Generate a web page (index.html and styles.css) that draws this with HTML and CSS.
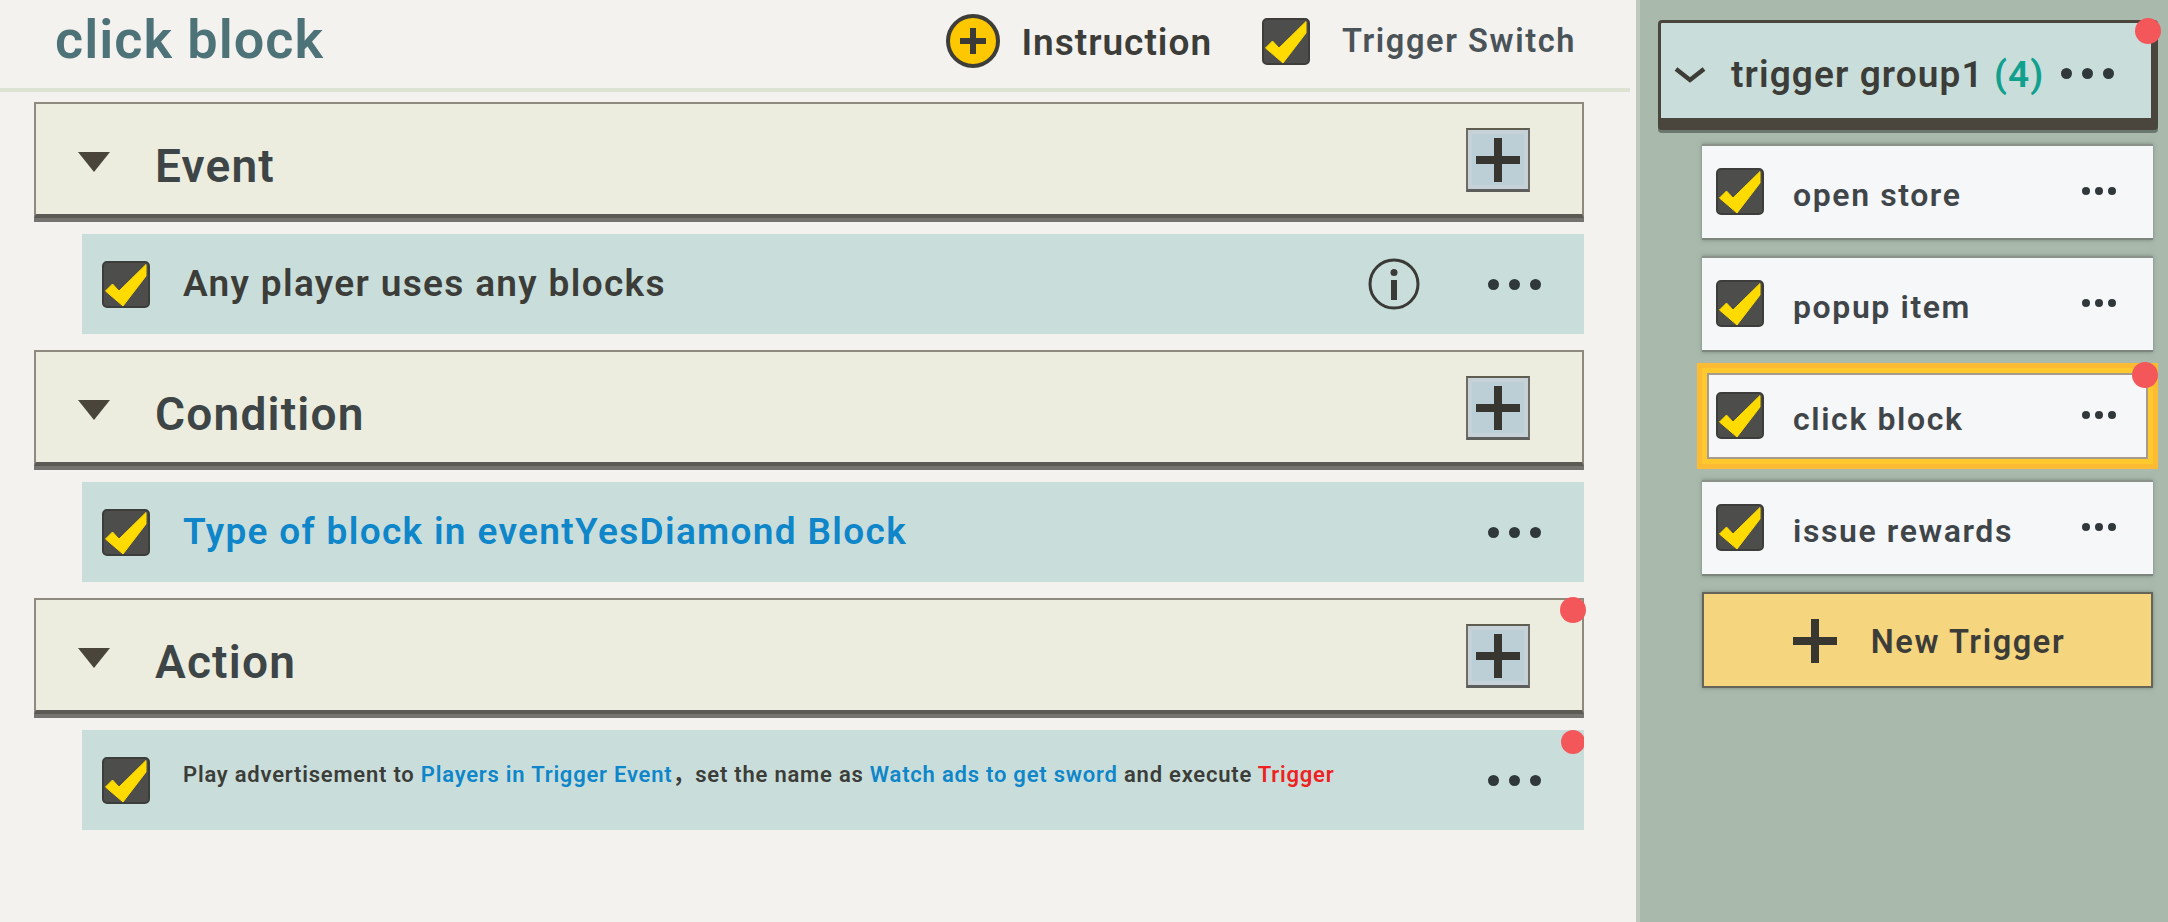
FILE: index.html
```html
<!DOCTYPE html>
<html lang="en">
<head>
  <meta charset="UTF-8">
  <meta name="viewport" content="width=device-width, initial-scale=1.0">
  <title>click block</title>
  <link rel="stylesheet" href="styles.css">
</head>
<body>
  <!-- shared checkbox icon -->
  <svg class="defs" width="0" height="0">
    <symbol id="check" viewBox="0 0 48 47">
      <rect x="1" y="1" width="46" height="45" rx="4" fill="#4d4d4b" stroke="#3d3d3b" stroke-width="2"/>
      <path d="M3.5 30 L10.5 23 L17 30 L44 3.5 L44 15 L21 45 Z" fill="#ffdb00" stroke="#ffdb00" stroke-width="1"/>
    </symbol>
  </svg>

  <main class="editor">
    <header class="topbar">
      <h1 class="title">click block</h1>
      <div class="instruction">
        <svg class="instruction-icon" viewBox="0 0 54 54">
          <circle cx="27" cy="27" r="25" fill="#fdc800" stroke="#3d3d3a" stroke-width="4"/>
          <path d="M14 24h10V14h6v10h10v6H30v10h-6V30H14z" fill="#3a3a36"/>
        </svg>
        <span>Instruction</span>
      </div>
      <div class="switch">
        <svg class="check"><use href="#check"/></svg>
        <span>Trigger Switch</span>
      </div>
    </header>

    <div class="blocks">
      <section class="block">
        <div class="block-head">
          <span class="arrow"></span>
          <h2>Event</h2>
          <button class="add"><i></i></button>
        </div>
        <div class="row">
          <svg class="check"><use href="#check"/></svg>
          <p class="row-text">Any player uses any blocks</p>
          <svg class="info" viewBox="0 0 52 52">
            <circle cx="26" cy="26" r="24" fill="none" stroke="#3a3a36" stroke-width="3"/>
            <circle cx="26" cy="14.5" r="3.5" fill="#3a3a36"/>
            <rect x="23" y="22" width="6" height="20" fill="#3a3a36"/>
          </svg>
          <span class="dots"><i></i><i></i><i></i></span>
        </div>
      </section>

      <section class="block">
        <div class="block-head">
          <span class="arrow"></span>
          <h2>Condition</h2>
          <button class="add"><i></i></button>
        </div>
        <div class="row">
          <svg class="check"><use href="#check"/></svg>
          <p class="row-text blue">Type of block in eventYesDiamond Block</p>
          <span class="dots"><i></i><i></i><i></i></span>
        </div>
      </section>

      <section class="block">
        <div class="block-head">
          <span class="arrow"></span>
          <h2>Action</h2>
          <button class="add"><i></i></button>
          <span class="red-dot"></span>
        </div>
        <div class="row">
          <svg class="check"><use href="#check"/></svg>
          <p class="row-text small">Play advertisement to <span class="blue">Players in Trigger Event</span>，set the name as <span class="blue">Watch ads to get sword</span> and execute <span class="red">Trigger</span></p>
          <span class="dots"><i></i><i></i><i></i></span>
          <span class="red-dot"></span>
        </div>
      </section>
    </div>
  </main>

  <aside class="sidebar">
    <div class="group">
      <svg class="chevron" viewBox="0 0 32 16"><path d="M2 2l14 11L30 2" fill="none" stroke="#3d3c36" stroke-width="4.5"/></svg>
      <span class="group-name">trigger group1 <span class="count">(4)</span></span>
      <span class="dots"><i></i><i></i><i></i></span>
      <span class="red-dot"></span>
    </div>

    <ul class="triggers">
      <li class="trigger">
        <svg class="check"><use href="#check"/></svg>
        <span class="trigger-name">open store</span>
        <span class="dots"><i></i><i></i><i></i></span>
      </li>
      <li class="trigger">
        <svg class="check"><use href="#check"/></svg>
        <span class="trigger-name">popup item</span>
        <span class="dots"><i></i><i></i><i></i></span>
      </li>
      <li class="trigger selected">
        <svg class="check"><use href="#check"/></svg>
        <span class="trigger-name">click block</span>
        <span class="dots"><i></i><i></i><i></i></span>
        <span class="red-dot"></span>
      </li>
      <li class="trigger">
        <svg class="check"><use href="#check"/></svg>
        <span class="trigger-name">issue rewards</span>
        <span class="dots"><i></i><i></i><i></i></span>
      </li>
    </ul>

    <button class="new-trigger">
      <svg viewBox="0 0 44 44"><path d="M18 0h8v18h18v8H26v18h-8V26H0v-8h18z" fill="#373630"/></svg>
      <span>New Trigger</span>
    </button>
  </aside>
</body>
</html>
```

FILE: styles.css
```css
* {
  box-sizing: border-box;
}

html, body {
  height: 100%;
}

body {
  margin: 0;
  display: flex;
  overflow: hidden;
  background-color: #f3f2ef;
  color: #3c3d39;
  font-family: Roboto, "Noto Sans CJK SC", sans-serif;
  font-weight: 600;
}

.defs {
  position: absolute;
}

.check {
  display: block;
  flex: none;
  width: 48px;
  height: 47px;
}

/* Left editor */
.editor {
  width: 1636px;
  flex: none;
}

.topbar {
  display: flex;
  align-items: center;
  width: 1630px;
  height: 92px;
  padding: 0 54px 6px 55px;
  border-bottom: 4px solid #dde3d2;
}

.title {
  margin: -4px auto 0 0;
  color: #4d7277;
  font-size: 54px;
  font-weight: 600;
  letter-spacing: 1px;
}

.instruction {
  display: flex;
  align-items: center;
  gap: 21px;
  margin-right: 50px;
  font-size: 37px;
  letter-spacing: 1px;
}

.instruction-icon {
  display: block;
  width: 54px;
  height: 54px;
}

.instruction span {
  margin-top: 3px;
}

.switch {
  display: flex;
  align-items: center;
  gap: 32px;
  color: #4a5358;
  font-size: 32.5px;
  letter-spacing: 1.6px;
}

.blocks {
  padding: 10px 52px 0 34px;
}

.block {
  margin-bottom: 16px;
}

.block-head {
  position: relative;
  display: flex;
  align-items: center;
  height: 116px;
  margin-bottom: 16px;
  padding: 0 52px 0 42px;
  background-color: #ecedde;
  border: 2px solid #8f8a7e;
  border-bottom: 4px solid #5b5a55;
  box-shadow: 0 4px 0 #767470;
}

.block-head h2 {
  flex: 1;
  margin: 14px 0 0 45px;
  color: #3d4547;
  font-size: 46px;
  font-weight: 600;
  letter-spacing: 1.2px;
}

.arrow {
  width: 0;
  height: 0;
  margin-top: 6px;
  border-left: 16px solid transparent;
  border-right: 16px solid transparent;
  border-top: 20px solid #4a453a;
}

.add {
  position: relative;
  width: 64px;
  height: 64px;
  margin-top: 2px;
  padding: 0;
  background-color: #bdcfd6;
  border: 2px solid #6d6d66;
  border-top-color: #5f5c50;
  border-bottom: 3px solid #5d5d5c;
  box-shadow: inset 0 0 0 4px #c6d2d8;
}

.add::before,
.add i {
  position: absolute;
  background-color: #373630;
  content: "";
}

.add::before {
  left: 26px;
  top: 8px;
  width: 8px;
  height: 44px;
}

.add i {
  left: 8px;
  top: 26px;
  width: 44px;
  height: 8px;
}

.row {
  position: relative;
  display: flex;
  align-items: center;
  height: 100px;
  margin-left: 48px;
  padding: 0 43px 0 20px;
  background-color: #c9dedb;
  overflow: hidden;
}

.row-text {
  flex: 1;
  margin: -1px 0 0 33px;
  font-size: 37px;
  letter-spacing: 1.33px;
}

.row-text.small {
  margin-top: -16px;
  font-size: 22px;
  letter-spacing: .78px;
}

.blue {
  color: #0e86c9;
}

.red {
  color: #ee2222;
}

.info {
  width: 52px;
  height: 52px;
  margin-right: 68px;
}

.dots {
  display: flex;
  flex: none;
  gap: 10px;
}

.dots i {
  width: 11px;
  height: 11px;
  background-color: #30383b;
  border-radius: 50%;
}

.red-dot {
  position: absolute;
  top: -3px;
  right: -4px;
  width: 26px;
  height: 26px;
  background-color: #f4575a;
  border-radius: 50%;
}

.row .red-dot {
  top: 0;
  right: -1px;
  width: 24px;
  height: 24px;
}

/* Right sidebar */
.sidebar {
  flex: 1;
  padding: 20px 10px 0 18px;
  background-color: #a9baad;
  border-left: 4px solid #c0c8bd;
}

.group {
  position: relative;
  display: flex;
  align-items: center;
  height: 110px;
  padding: 0 37px 0 13px;
  background-color: #c9dedb;
  border: 3px solid #4a463e;
  border-right-width: 7px;
  border-bottom-width: 12px;
  border-radius: 4px;
  box-shadow: 0 3px 0 #6a776c;
}

.chevron {
  width: 32px;
  height: 16px;
  margin-top: 8px;
}

.group-name {
  flex: 1;
  margin: 8px 0 0 25px;
  font-size: 37px;
  letter-spacing: 1.1px;
  white-space: nowrap;
}

.count {
  color: #12a08e;
}

.group .dots {
  margin-top: 6px;
}

.group .red-dot {
  top: -5px;
  right: -10px;
}

.triggers {
  margin: 14px 5px 0 44px;
  padding: 0;
  list-style: none;
}

.trigger {
  position: relative;
  display: flex;
  align-items: center;
  height: 96px;
  margin-bottom: 16px;
  padding: 0 37px 2px 14px;
  background-color: #f5f7f9;
  border-top: 2px solid #8a928a;
  border-bottom: 2px solid #7d867d;
  box-shadow: 0 0 4px rgba(70, 85, 75, .5);
}

.trigger-name {
  flex: 1;
  margin: 8px 0 0 29px;
  color: #3f4548;
  font-size: 32px;
  letter-spacing: 1.6px;
}

.trigger .dots {
  gap: 5px;
}

.trigger .dots i {
  width: 8px;
  height: 8px;
}

.trigger.selected {
  border: 0;
  box-shadow: inset 0 0 0 5px #fec92e, inset 0 0 0 7px #a59c8e, 0 0 0 5px #fdbb33;
}

.trigger.selected .red-dot {
  top: -6px;
  right: -5px;
}

.new-trigger {
  display: flex;
  align-items: center;
  justify-content: center;
  gap: 34px;
  width: 451px;
  height: 96px;
  margin-left: 44px;
  padding: 0 0 0 3px;
  background-color: #f6d57f;
  border: 2px solid #66645a;
  box-shadow: 0 0 4px rgba(70, 85, 75, .5);
  color: #3c3d39;
  font-family: inherit;
  font-size: 32.5px;
  font-weight: 600;
  letter-spacing: 1.6px;
}

.new-trigger svg {
  width: 44px;
  height: 44px;
  margin-top: 2px;
}

.new-trigger span {
  margin-top: 4px;
}
```
